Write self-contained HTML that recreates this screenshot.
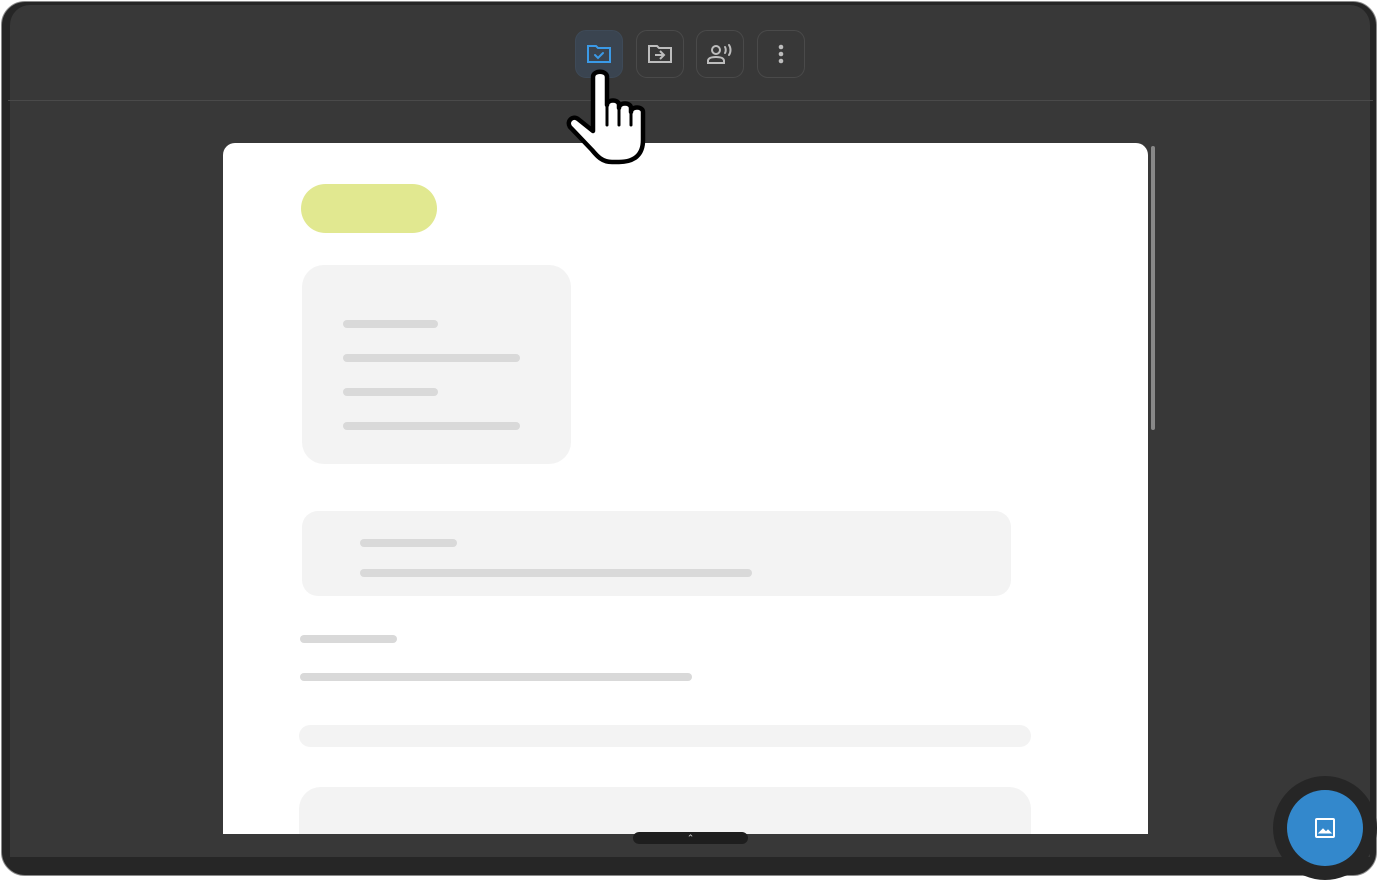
<!DOCTYPE html>
<html><head><meta charset="utf-8"><style>
html,body{margin:0;padding:0;width:1379px;height:878px;background:#fff;overflow:hidden;font-family:"Liberation Sans",sans-serif}
.frame{position:absolute;left:1px;top:1px;width:1376px;height:875px;border-radius:24px;background:#262626;border:1px solid #8a8a8a;box-sizing:border-box;overflow:hidden}
.inner{position:absolute;left:8px;top:3px;right:6px;bottom:18px;background:#383838;border-radius:20px 20px 0 0}
.sep{position:absolute;left:8px;right:6px;top:100px;height:1px;background:#4a4a4a}
.btn{position:absolute;top:30px;width:48px;height:48px;border-radius:11px;border:1px solid #4a4a4a;box-sizing:border-box;display:flex;align-items:center;justify-content:center}
.doc{position:absolute;left:223px;top:143px;width:925px;height:691px;background:#fff;border-radius:12px 12px 0 0;overflow:hidden}
.bar{position:absolute;background:#d9d9d9;height:8px;border-radius:4px}
.card{position:absolute;background:#f3f3f3}
</style></head><body>
<div class="frame">
 <div class="inner"></div>
</div>
<div class="sep"></div>
<div class="btn" style="left:575px;background:#3a4450;border-color:#3e4a58">
 <svg width="26" height="22" viewBox="0 0 26 22" fill="none" stroke="#3a9ae8" stroke-width="2"><path d="M2 3h8l2 2h12v14H2z"/><path d="M9 12l3 3 5-5" stroke-linecap="round"/></svg>
</div>
<div class="btn" style="left:636px">
 <svg width="26" height="22" viewBox="0 0 26 22" fill="none" stroke="#bdbdbd" stroke-width="2"><path d="M2 3h8l2 2h12v14H2z"/><path d="M8 12h9M13 8l4 4-4 4"/></svg>
</div>
<div class="btn" style="left:696px">
 <svg width="28" height="24" viewBox="0 0 28 24" fill="none" stroke="#bdbdbd" stroke-width="2"><circle cx="10" cy="8" r="4"/><path d="M2 21v-2c0-3 4-4 8-4s8 1 8 4v2z"/><path d="M19 5c1 1.5 1 4.5 0 6M23 3c2 3 2 7 0 10" stroke-linecap="round"/></svg>
</div>
<div class="btn" style="left:757px">
 <svg width="6" height="22" viewBox="0 0 6 22" fill="#bdbdbd"><circle cx="3" cy="4" r="2.3"/><circle cx="3" cy="11" r="2.3"/><circle cx="3" cy="18" r="2.3"/></svg>
</div>
<div style="position:absolute;left:1151px;top:146px;width:4px;height:284px;background:#888;border-radius:2px"></div>
<div class="doc">
 <div style="position:absolute;left:78px;top:41px;width:136px;height:49px;border-radius:25px;background:#e1e890"></div>
 <div class="card" style="left:79px;top:122px;width:269px;height:199px;border-radius:22px"></div>
 <div class="bar" style="left:120px;top:177px;width:95px"></div>
 <div class="bar" style="left:120px;top:211px;width:177px"></div>
 <div class="bar" style="left:120px;top:245px;width:95px"></div>
 <div class="bar" style="left:120px;top:279px;width:177px"></div>
 <div class="card" style="left:79px;top:368px;width:709px;height:85px;border-radius:16px"></div>
 <div class="bar" style="left:137px;top:396px;width:97px"></div>
 <div class="bar" style="left:137px;top:426px;width:392px"></div>
 <div class="bar" style="left:77px;top:492px;width:97px"></div>
 <div class="bar" style="left:77px;top:530px;width:392px"></div>
 <div class="card" style="left:76px;top:582px;width:732px;height:22px;border-radius:11px"></div>
 <div class="card" style="left:76px;top:644px;width:732px;height:60px;border-radius:22px 22px 0 0"></div>
</div>
<div style="position:absolute;left:633px;top:832px;width:115px;height:12px;border-radius:6px;background:#1e1e1e;color:#ccc;font-size:9px;text-align:center;line-height:12px">&#8963;</div>
<div style="position:absolute;left:1273px;top:776px;width:104px;height:104px;border-radius:50%;background:#262626"></div>
<div style="position:absolute;left:1287px;top:790px;width:76px;height:76px;border-radius:50%;background:#3388cc;display:flex;align-items:center;justify-content:center">
 <svg width="22" height="22" viewBox="0 0 22 22" fill="none" stroke="#fff" stroke-width="2"><rect x="2" y="2" width="18" height="18" rx="1"/><path d="M5 16l4-4 3 3 2-2 3 3z" fill="#fff" stroke-width="1"/></svg>
</div>
<svg style="position:absolute;left:558px;top:65px" width="100" height="105" viewBox="0 0 100 105">
 <path d="M35 12c0-7 14-7 14 0v28c0-6 12-6 12 0v3c0-6 12-6 12 0v4c0-6 12-6 12 0v28c0 15-9 22-24 22h-7c-10 0-15-6-20-12L12 62c-4-6 3-12 8-8l15 12z" fill="#fff" stroke="#000" stroke-width="4.5" stroke-linejoin="round"/>
 <path d="M49 40v20M61 43v17M73 47v13" stroke="#000" stroke-width="3" stroke-linecap="round"/>
</svg>
</body></html>
